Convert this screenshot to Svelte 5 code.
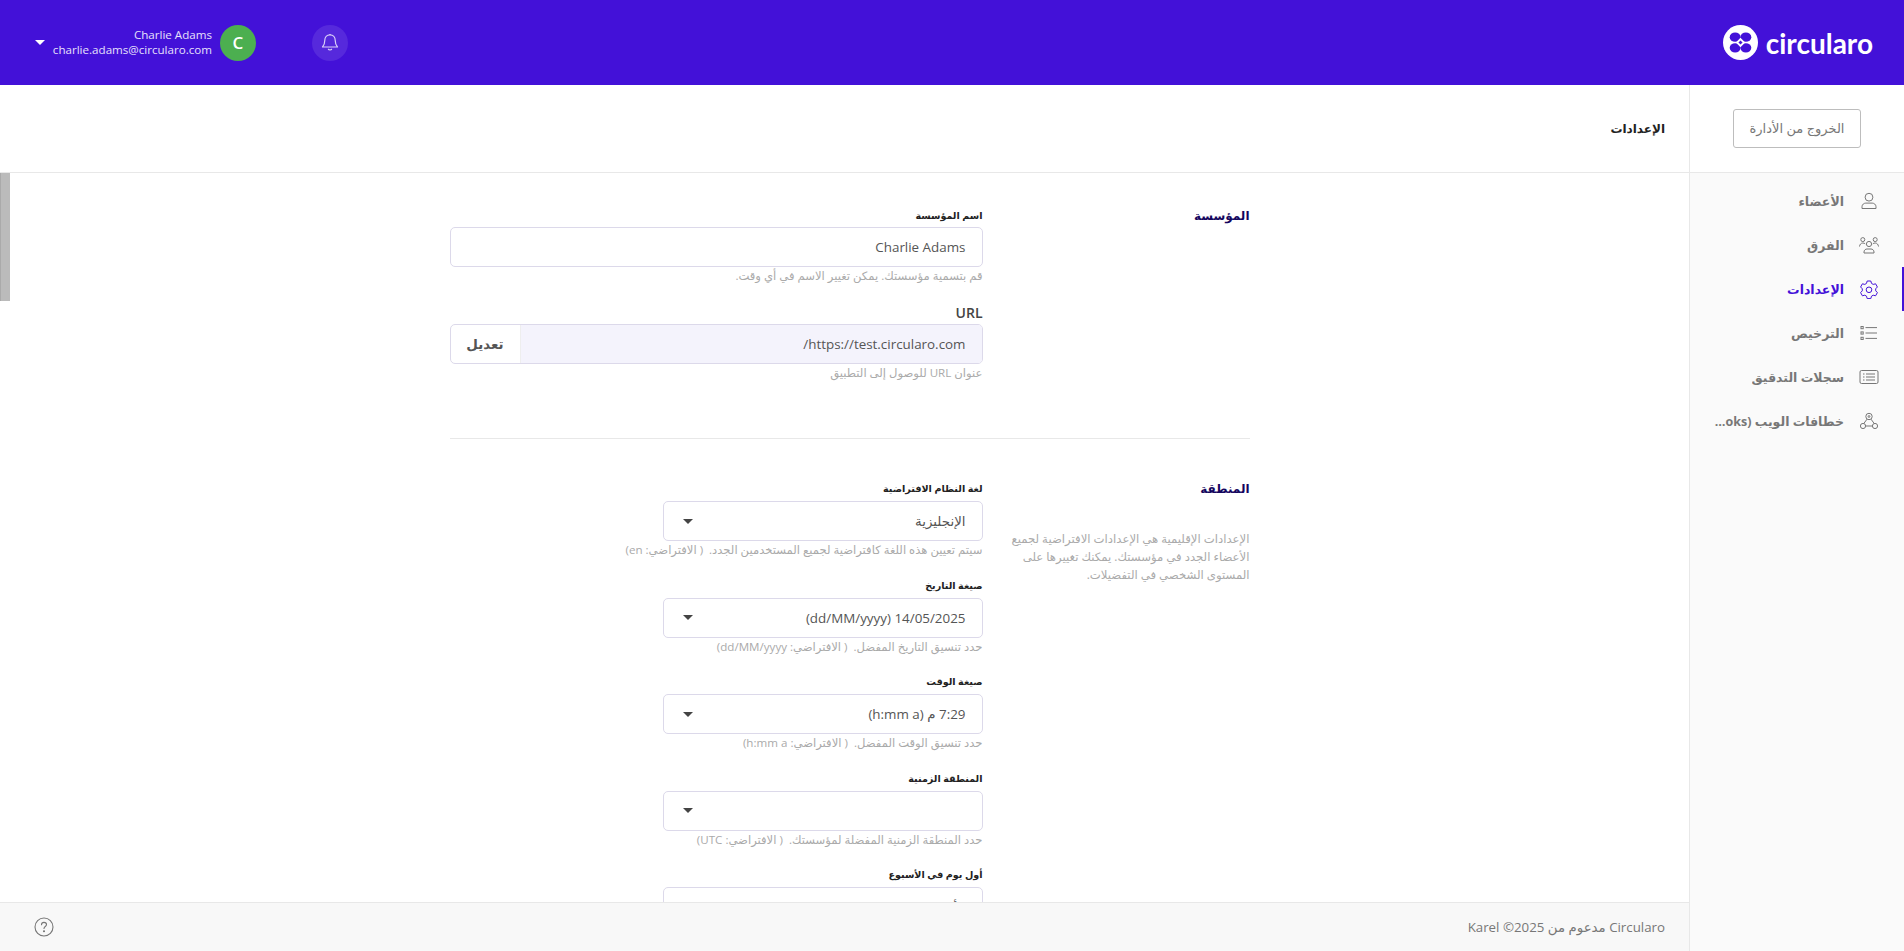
<script>
    const navItems = [
        { label: "الأعضاء", icon: "user" },
        { label: "الفرق", icon: "team" },
        { label: "الإعدادات", icon: "gear", active: true },
        { label: "الترخيص", icon: "list" },
        { label: "سجلات التدقيق", icon: "log" },
        { label: "خطافات الويب (Webhooks)", icon: "hook" }
    ]

    const regionFields = [
        { label: "لغة النظام الافتراضية", value: "الإنجليزية", help: "سيتم تعيين هذه اللغة كافتراضية لجميع المستخدمين الجدد.  ( الافتراضي: en)" },
        { label: "صيغة التاريخ", value: "14/05/2025 (dd/MM/yyyy)", help: "حدد تنسيق التاريخ المفضل.  ( الافتراضي: dd/MM/yyyy)" },
        { label: "صيغة الوقت", value: "7:29 م (h:mm a)", help: "حدد تنسيق الوقت المفضل.  ( الافتراضي: h:mm a)" },
        { label: "المنطقة الزمنية", value: "", help: "حدد المنطقة الزمنية المفضلة لمؤسستك.  ( الافتراضي: UTC)" },
        { label: "أول يوم في الأسبوع", value: "الأحد", help: "" }
    ]
</script>

<div class="app">
    <header class="topbar">
        <div class="account">
            <span class="caret white"></span>
            <div class="who">
                <div>Charlie Adams</div>
                <div>charlie.adams@circularo.com</div>
            </div>
            <div class="avatar">C</div>
        </div>
        <button class="bell" aria-label="notifications">
            <svg width="18" height="20" viewBox="0 0 18 20" fill="none" stroke="#d9cff8" stroke-width="1.2">
                <path d="M9 1.8c-3.2 0-5.2 2.4-5.2 5.4 0 3.6-.9 5.3-2.3 6.8h15c-1.4-1.5-2.3-3.2-2.3-6.8 0-3-2-5.4-5.2-5.4z" stroke-linejoin="round" />
                <path d="M7.4 16.2c.4.9 2.8.9 3.2 0" stroke-linecap="round" />
                <path d="M9 1v1" />
            </svg>
        </button>
        <div class="logo">
            <span class="logo-text">circularo</span>
            <svg width="35" height="35" viewBox="0 0 34 34">
                <circle cx="17" cy="17" r="17" fill="#fff" />
                <g fill="#4311d8">
                    <ellipse cx="11.8" cy="11.8" rx="5.3" ry="4.5" />
                    <ellipse cx="22.2" cy="11.8" rx="5.3" ry="4.5" />
                    <ellipse cx="11.8" cy="22.2" rx="5.3" ry="4.5" />
                    <ellipse cx="22.2" cy="22.2" rx="5.3" ry="4.5" />
                </g>
                <path d="M17 12.5l4.5 4.5-4.5 4.5-4.5-4.5z" fill="#fff" />
                <path d="M17 15l2 2-2 2-2-2z" fill="#4311d8" />
            </svg>
        </div>
    </header>

    <div class="body" dir="rtl">
        <aside class="side">
            <div class="side-top">
                <button class="exit">الخروج من الأدارة</button>
            </div>
            <nav class="nav">
                {#each navItems as item}
                    <div class="nav-item" class:active={item.active}>
                        <span class="nav-icon">
                            <svg width="20" height="20" viewBox="0 0 20 20" fill="none" stroke="currentColor" stroke-width="1">
                                {#if item.icon === "user"}
                                    <circle cx="10" cy="6.2" r="3.9" />
                                    <path d="M3 17.5v-1.8c0-2.2 2-3.6 3.8-3.6h6.4c1.8 0 3.8 1.4 3.8 3.6v1.8z" />
                                {:else if item.icon === "team"}
                                    <circle cx="10" cy="9" r="2.6" />
                                    <path d="M5 18v-1c0-1.8 1.5-3 3-3h4c1.500 0 3 1.200 3 3v1z" />
                                    <circle cx="3.800" cy="4.600" r="2" />
                                    <circle cx="16.200" cy="4.600" r="2" />
                                    <path d="M0.500 11.500c.2-2 1.500-3.500 3.300-3.500 1 0 1.800.3 2.400.9M19.500 11.500c-.2-2-1.500-3.500-3.300-3.500-1 0-1.800.3-2.400.9" />
                                {:else if item.icon === "gear"}
                                    <path d="M8.200 2h3.600l.7 2.400 1.700 1 2.400-.6 1.800 3.200-1.700 1.800v2l1.700 1.800-1.800 3.200-2.400-.6-1.700 1-.7 2.400H8.200l-.7-2.400-1.700-1-2.400.6-1.800-3.200L3.300 11.800v-2L1.600 8l1.800-3.200 2.400.6 1.700-1z" stroke-linejoin="round" />
                                    <circle cx="10" cy="10.800" r="2.800" />
                                {:else if item.icon === "list"}
                                    <rect x="2" y="3.500" width="2.200" height="2.200" />
                                    <rect x="2" y="8.900" width="2.200" height="2.200" />
                                    <rect x="2" y="14.300" width="2.200" height="2.200" />
                                    <path d="M6.500 4.600H18M6.500 10H18M6.500 15.400H18" />
                                {:else if item.icon === "log"}
                                    <rect x="1" y="3.500" width="18" height="13" rx="1.500" />
                                    <path d="M7 7h9M7 10h9M7 13h9M4 7h1.500M4 10h1.500M4 13h1.500" />
                                {:else}
                                    <circle cx="10" cy="5.500" r="3.200" />
                                    <circle cx="10" cy="5.500" r=".9" />
                                    <circle cx="4" cy="15" r="2.600" />
                                    <circle cx="16" cy="15" r="2.600" />
                                    <path d="M8 8.200L4.800 12.500M6.500 15h7M12 8.200l3.200 4.300" />
                                {/if}
                            </svg>
                        </span>
                        <span class="nav-label">{item.label}</span>
                    </div>
                {/each}
            </nav>
        </aside>

        <main class="main">
            <div class="page-head"><h1>الإعدادات</h1></div>

            <div class="scroll">
                <div class="thumb"></div>
                <div class="content">
                    <section class="section first">
                        <div class="intro">
                            <h2>المؤسسة</h2>
                        </div>
                        <div class="form">
                            <div class="field">
                                <div class="label">اسم المؤسسة</div>
                                <div class="input">Charlie Adams</div>
                                <div class="help">قم بتسمية مؤسستك. يمكن تغيير الاسم في أي وقت.</div>
                            </div>
                            <div class="field">
                                <div class="label url">URL</div>
                                <div class="input split">
                                    <span class="url-value">https://test.circularo.com/</span>
                                    <span class="edit">تعديل</span>
                                </div>
                                <div class="help">عنوان URL للوصول إلى التطبيق</div>
                            </div>
                        </div>
                    </section>

                    <section class="section">
                        <div class="intro">
                            <h2>المنطقة</h2>
                            <p>الإعدادات الإقليمية هي الإعدادات الافتراضية لجميع الأعضاء الجدد في مؤسستك. يمكنك تغييرها على المستوى الشخصي في التفضيلات.</p>
                        </div>
                        <div class="form">
                            {#each regionFields as field}
                                <div class="field narrow">
                                    <div class="label">{field.label}</div>
                                    <div class="input select">
                                        <span>{field.value}</span>
                                        <span class="caret"></span>
                                    </div>
                                    <div class="help">{field.help}</div>
                                </div>
                            {/each}
                        </div>
                    </section>
                </div>
            </div>

            <footer class="foot">
                <span>Circularo مدعوم من 2025© Karel</span>
                <svg width="20" height="20" viewBox="0 0 20 20" fill="none" stroke="#777" stroke-width="1.1">
                    <circle cx="10" cy="10" r="9" />
                    <path d="M7.500 7.800c0-1.500 1.100-2.400 2.500-2.400s2.500.9 2.500 2.200c0 1.800-2.500 1.900-2.500 3.800" stroke-linecap="round" />
                    <circle cx="10" cy="14.300" r=".5" fill="#777" />
                </svg>
            </footer>
        </main>
    </div>
</div>

<style>
    :global(body) {
        background: #fff;
    }

    .app {
        height: 951px;
        display: flex;
        flex-direction: column;
        overflow: hidden;
        font-family: "Open Sans", "DejaVu Sans", sans-serif;
        color: #444;
    }

    button {
        all: unset;
        box-sizing: border-box;
    }

    /* top bar */
    .topbar {
        height: 85px;
        flex: none;
        background: #4311d8;
        display: flex;
        align-items: center;
        padding: 0 31px 0 35px;
        color: #fff;
    }

    .account {
        width: 221px;
        display: flex;
        align-items: center;
    }

    .who {
        flex: 1;
        text-align: right;
        font-size: 11.6px;
        line-height: 14.500px;
        color: #e6e0fb;
    }

    .avatar {
        width: 36px;
        height: 36px;
        margin-left: 8px;
        border-radius: 50%;
        background: #4caf50;
        display: grid;
        place-items: center;
        font-size: 17px;
        font-weight: 600;
    }

    .bell {
        width: 36px;
        height: 36px;
        margin-left: 56px;
        border-radius: 50%;
        background: rgba(255, 255, 255, 0.1);
        display: grid;
        place-items: center;
    }

    .logo {
        margin-left: auto;
        display: flex;
        flex-direction: row-reverse;
        align-items: center;
        gap: 8px;
    }

    .logo-text {
        font-family: "Lato", sans-serif;
        font-size: 28px;
        font-weight: 700;
        color: #fff;
    }

    .caret {
        width: 0;
        height: 0;
        border-left: 5px solid transparent;
        border-right: 5px solid transparent;
        border-top: 5px solid #444;
    }

    .caret.white {
        border-top-color: #fff;
    }

    /* layout */
    .body {
        flex: 1;
        min-height: 0;
        display: flex;
    }

    .side {
        width: 214px;
        flex: none;
        border-left: 1px solid #e8e8e8;
        box-sizing: content-box;
        display: flex;
        flex-direction: column;
    }

    .side-top {
        height: 87px;
        flex: none;
        display: flex;
        align-items: center;
        padding-right: 43px;
        border-bottom: 1px solid #e8e8e8;
    }

    .exit {
        width: 128px;
        height: 39px;
        border: 1px solid #bdbdbd;
        border-radius: 3px;
        text-align: center;
        line-height: 37px;
        font-size: 13px;
        color: #777;
    }

    .nav {
        flex: 1;
        background: #fafafa;
        padding-top: 6px;
    }

    .nav-item {
        height: 44px;
        display: flex;
        align-items: center;
        color: #777;
        font-size: 12.5px;
        font-weight: 700;
        padding-right: 25px;
        border-right: 2px solid transparent;
    }

    .nav-item.active {
        color: #4311d8;
        border-right-color: #4311d8;
    }

    .nav-icon {
        width: 20px;
        height: 20px;
        margin-left: 15px;
        margin-right: -2px;
        flex: none;
    }

    .nav-label {
        max-width: 132px;
        white-space: nowrap;
        overflow: hidden;
        text-overflow: ellipsis;
    }

    /* main column */
    .main {
        flex: 1;
        min-width: 0;
        display: flex;
        flex-direction: column;
    }

    .page-head {
        height: 87px;
        flex: none;
        display: flex;
        align-items: center;
        padding-right: 24px;
        border-bottom: 1px solid #e8e8e8;
    }

    h1 {
        margin: 0;
        font-size: 12px;
        font-weight: 700;
        color: #222;
    }

    .scroll {
        position: relative;
        flex: 1;
        min-height: 0;
        overflow: hidden;
        padding-left: 10px;
    }

    .thumb {
        position: absolute;
        left: 0;
        top: 0;
        width: 10px;
        height: 128px;
        box-sizing: border-box;
        background: #bbb;
        border-left: 1px solid #aaa;
    }

    .content {
        width: 800px;
        margin: 0 auto;
    }

    .section {
        display: flex;
        gap: 25px;
        padding: 42px 0 0;
    }

    .section.first {
        padding: 35px 0 57px;
        border-bottom: 1px solid #e8e8e8;
    }

    .intro {
        width: 242px;
        flex: none;
    }

    h2 {
        margin: 0 0 32px;
        font-size: 12px;
        line-height: 16px;
        font-weight: 700;
        color: #14065e;
    }

    .intro p {
        margin: 0;
        font-size: 11.7px;
        line-height: 18px;
        color: #aaa;
    }

    .form {
        flex: 1;
        display: flex;
        flex-direction: column;
        gap: 19.5px;
    }

    .first .form {
        gap: 21px;
    }

    .field.narrow {
        width: 320px;
    }

    .label {
        font-size: 9.6px;
        line-height: 16px;
        margin-bottom: 4px;
        font-weight: 700;
        color: #222;
    }

    .first .label {
        margin-bottom: 3px;
    }

    .label.url {
        font-size: 14px;
        font-weight: 600;
        color: #444;
    }

    .input {
        height: 40px;
        box-sizing: border-box;
        border: 1px solid #dcd9ea;
        border-radius: 5px;
        padding: 0 16px;
        display: flex;
        align-items: center;
        font-size: 13.4px;
        color: #555;
    }

    .input.select {
        justify-content: space-between;
    }

    .input.select .caret {
        margin-left: 3px;
    }

    .input.split {
        padding: 0;
        overflow: hidden;
    }

    .url-value {
        flex: 1;
        height: 100%;
        display: flex;
        align-items: center;
        padding: 0 16px;
        background: #f4f3fc;
    }

    .edit {
        width: 69px;
        height: 100%;
        flex: none;
        display: grid;
        place-items: center;
        font-weight: 700;
        border-right: 1px solid #eee;
    }

    .help {
        margin-top: 1px;
        font-size: 11.6px;
        line-height: 16px;
        color: #aaa;
        white-space: pre;
    }

    /* footer */
    .foot {
        height: 48px;
        flex: none;
        border-top: 1px solid #e8e8e8;
        background: #f8f8f8;
        display: flex;
        align-items: center;
        justify-content: space-between;
        padding: 0 24px 0 34px;
        font-size: 13.3px;
        color: #777;
    }
</style>
